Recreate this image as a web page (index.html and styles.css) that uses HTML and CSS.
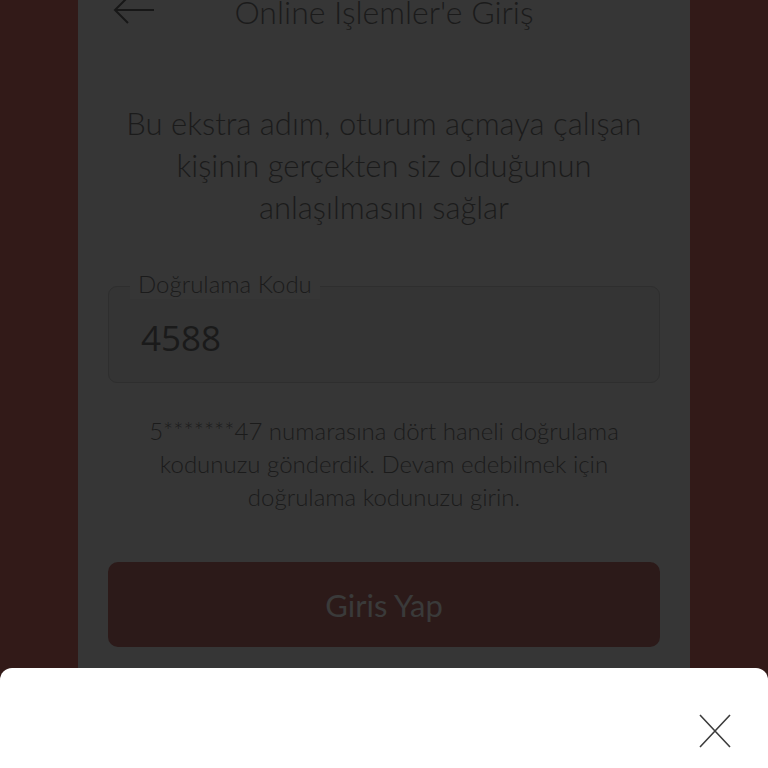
FILE: index.html
```html
<!DOCTYPE html>
<html lang="tr">
<head>
    <meta charset="UTF-8">
    <meta name="viewport" content="width=device-width, initial-scale=1.0">
    <title>Online İşlemler'e Giriş</title>
    <link rel="stylesheet" href="styles.css">
</head>
<body>
    <div class="page">
        <main class="panel">
            <header class="topbar">
                <a class="back" href="#" aria-label="Geri">
                    <svg width="44" height="34" viewBox="0 0 44 34">
                        <path d="M42 13H3M16 0L3 13L16 26" fill="none" stroke="#171717" stroke-width="2"/>
                    </svg>
                </a>
                <h1>Online İşlemler'e Giriş</h1>
            </header>

            <p class="lead">Bu ekstra adım, oturum açmaya çalışan kişinin gerçekten siz olduğunun anlaşılmasını sağlar</p>

            <label class="field">
                <span class="field-label">Doğrulama Kodu</span>
                <input type="text" value="4588" readonly>
            </label>

            <p class="note">5*******47 numarasına dört haneli doğrulama kodunuzu gönderdik. Devam edebilmek için doğrulama kodunuzu girin.</p>

            <button class="submit" disabled>Giris Yap</button>
        </main>
    </div>

    <div class="sheet">
        <button class="close" aria-label="Kapat">
            <svg width="32" height="34" viewBox="0 0 32 34">
                <path d="M1 1L31 33M31 1L1 33" fill="none" stroke="#3c3c3c" stroke-width="1.6"/>
            </svg>
        </button>
    </div>
</body>
</html>
```

FILE: styles.css
```css
html, body {
    margin: 0;
    height: 100%;
    overflow: hidden;
}
body {
    background: #321a18;
    font-family: Lato, "Open Sans", sans-serif;
    font-weight: 300;
    color: #1b1b1b;
}
.page {
    height: 100%;
    display: flex;
    justify-content: center;
}
.panel {
    width: 612px;
    box-sizing: border-box;
    padding: 0 30px;
    background: #363636;
    margin-top: -16px;
    text-align: center;
}

.topbar {
    position: relative;
    height: 56px;
    display: flex;
    align-items: center;
    justify-content: center;
}
.back {
    position: absolute;
    left: 4px;
    top: 13px;
    line-height: 0;
}
.topbar h1 {
    margin: 0;
    font-size: 32px;
    font-weight: 300;
    line-height: 56px;
}

.lead {
    margin: 62px 0 0;
    padding: 0 10px;
    font-size: 31px;
    line-height: 42px;
}

.field {
    display: block;
    position: relative;
    margin-top: 58px;
    text-align: left;
}
.field-label {
    position: absolute;
    left: 22px;
    top: -17px;
    padding: 0 8px;
    background: #363636;
    font-size: 24px;
    line-height: 30px;
}
.field input {
    width: 100%;
    height: 97px;
    box-sizing: border-box;
    padding: 6px 32px 0;
    border: 1px solid #2e2e2e;
    border-radius: 9px;
    background: #343434;
    font-family: "Open Sans", sans-serif;
    font-weight: 400;
    font-size: 35px;
    color: #1a1a1a;
    outline: none;
}

.note {
    margin: 31px 0 0;
    padding: 0 30px;
    font-size: 24px;
    line-height: 33px;
}

.submit {
    display: block;
    width: 100%;
    height: 85px;
    margin-top: 49px;
    border: 0;
    border-radius: 10px;
    background: #2c1a19;
    color: #3a3a3a;
    font-family: Lato, sans-serif;
    font-size: 31px;
    font-weight: 400;
}

.sheet {
    position: fixed;
    left: 0;
    right: 0;
    bottom: 0;
    height: 100px;
    background: #ffffff;
    border-radius: 12px 12px 0 0;
}
.close {
    position: absolute;
    right: 37px;
    top: 46px;
    padding: 0;
    border: 0;
    background: none;
    line-height: 0;
}
```
